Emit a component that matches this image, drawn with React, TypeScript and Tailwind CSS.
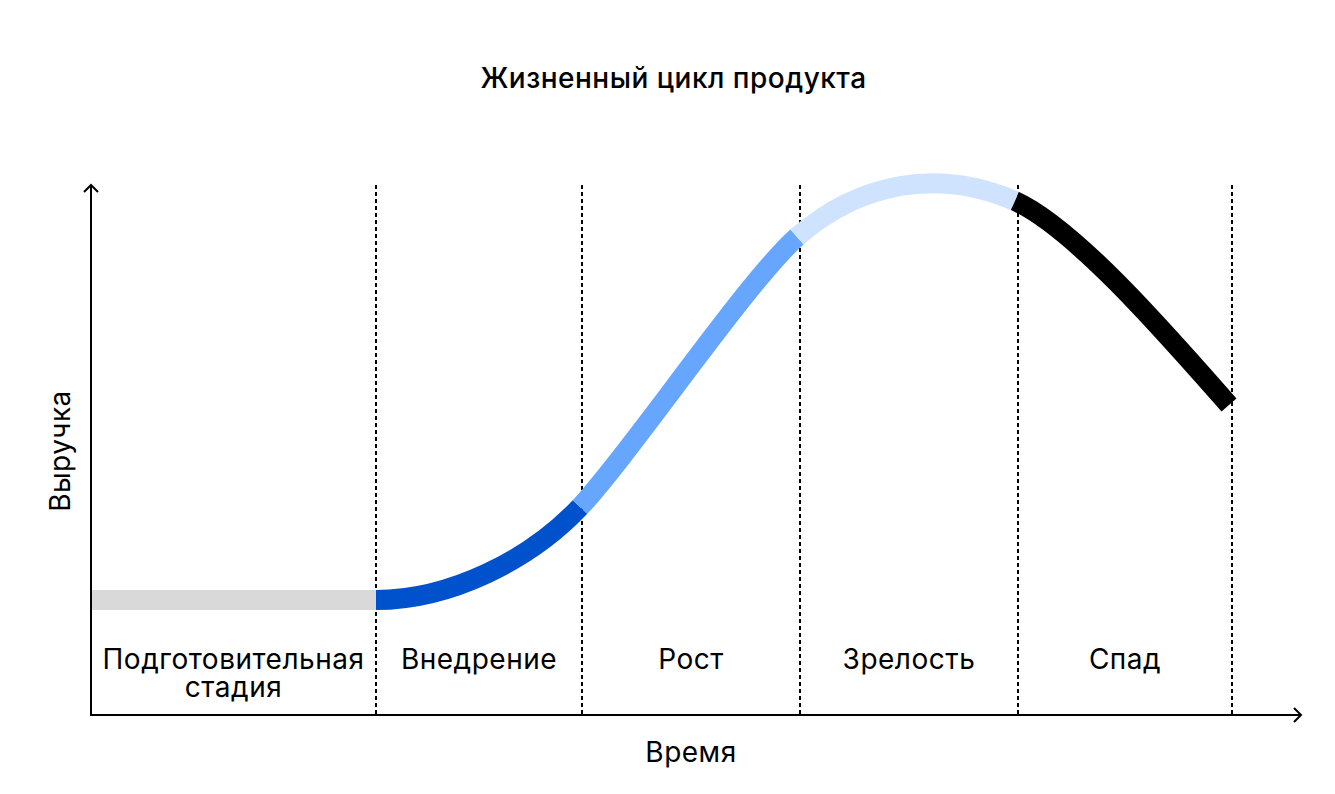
import React from "react";

const dividers = [376, 582, 800, 1018, 1232];

const stages = [
  { label: ["Подготовительная", "стадия"], w: 285 },
  { label: ["Внедрение"], w: 206 },
  { label: ["Рост"], w: 218 },
  { label: ["Зрелость"], w: 218 },
  { label: ["Спад"], w: 214 },
];

function Chart() {
  return (
    <svg
      className="absolute inset-0"
      width={1335}
      height={555}
      viewBox="0 170 1335 555"
      fill="none"
    >
      {dividers.map((x) => (
        <line
          key={x}
          x1={x}
          y1={185}
          x2={x}
          y2={715}
          stroke="#000"
          strokeWidth={2}
          strokeDasharray="4 3"
        />
      ))}
      {/* axes */}
      <line x1={91} y1={185} x2={91} y2={716} stroke="#000" strokeWidth={2} />
      <line x1={90} y1={715} x2={1301} y2={715} stroke="#000" strokeWidth={2} />
      <path d="M84 192 L91 185 L98 192" stroke="#000" strokeWidth={2} />
      <path d="M1294 708 L1301 715 L1294 722" stroke="#000" strokeWidth={2} />
      {/* curve */}
      <path d="M92 600 L376 600" stroke="#d9d9d9" strokeWidth={20} />
      <path d="M376 600 C450 600 530 560 580 507" stroke="#0052cc" strokeWidth={20} />
      <path d="M580 507 C630 454 747 281 797 237" stroke="#66a6ff" strokeWidth={20} />
      <path d="M797 237 C860 182 938 168 1015 201" stroke="#cfe3fe" strokeWidth={20} />
      <path d="M1015 201 C1075 228 1169 337 1229 405" stroke="#000" strokeWidth={20} />
    </svg>
  );
}

export default function App() {
  return (
    <div
      className="w-[1335px] h-[794px] bg-white text-black overflow-hidden tracking-[0.5px]"
      style={{ fontFamily: "Inter, 'Noto Sans', 'Liberation Sans', sans-serif" }}
    >
      <h1 className="h-[170px] pt-[60px] pl-[12px] text-center text-[28px] leading-[36px] font-medium">
        Жизненный цикл продукта
      </h1>
      <div className="relative h-[555px]">
        <Chart />
        <div className="absolute left-[60px] top-[281px] -translate-x-1/2 -translate-y-1/2 -rotate-90 whitespace-nowrap text-[28px] leading-[30px]">
          Выручка
        </div>
        <div className="absolute left-[91px] top-[475px] flex">
          {stages.map((s, i) => (
            <div
              key={i}
              className="flex flex-col items-center text-[28px] leading-[28px] text-center"
              style={{ width: s.w }}
            >
              {s.label.map((l) => (
                <span key={l}>{l}</span>
              ))}
            </div>
          ))}
        </div>
      </div>
      <div className="ml-[91px] w-[1200px] mt-[12px] text-center text-[28px] leading-[30px]">
        Время
      </div>
    </div>
  );
}
